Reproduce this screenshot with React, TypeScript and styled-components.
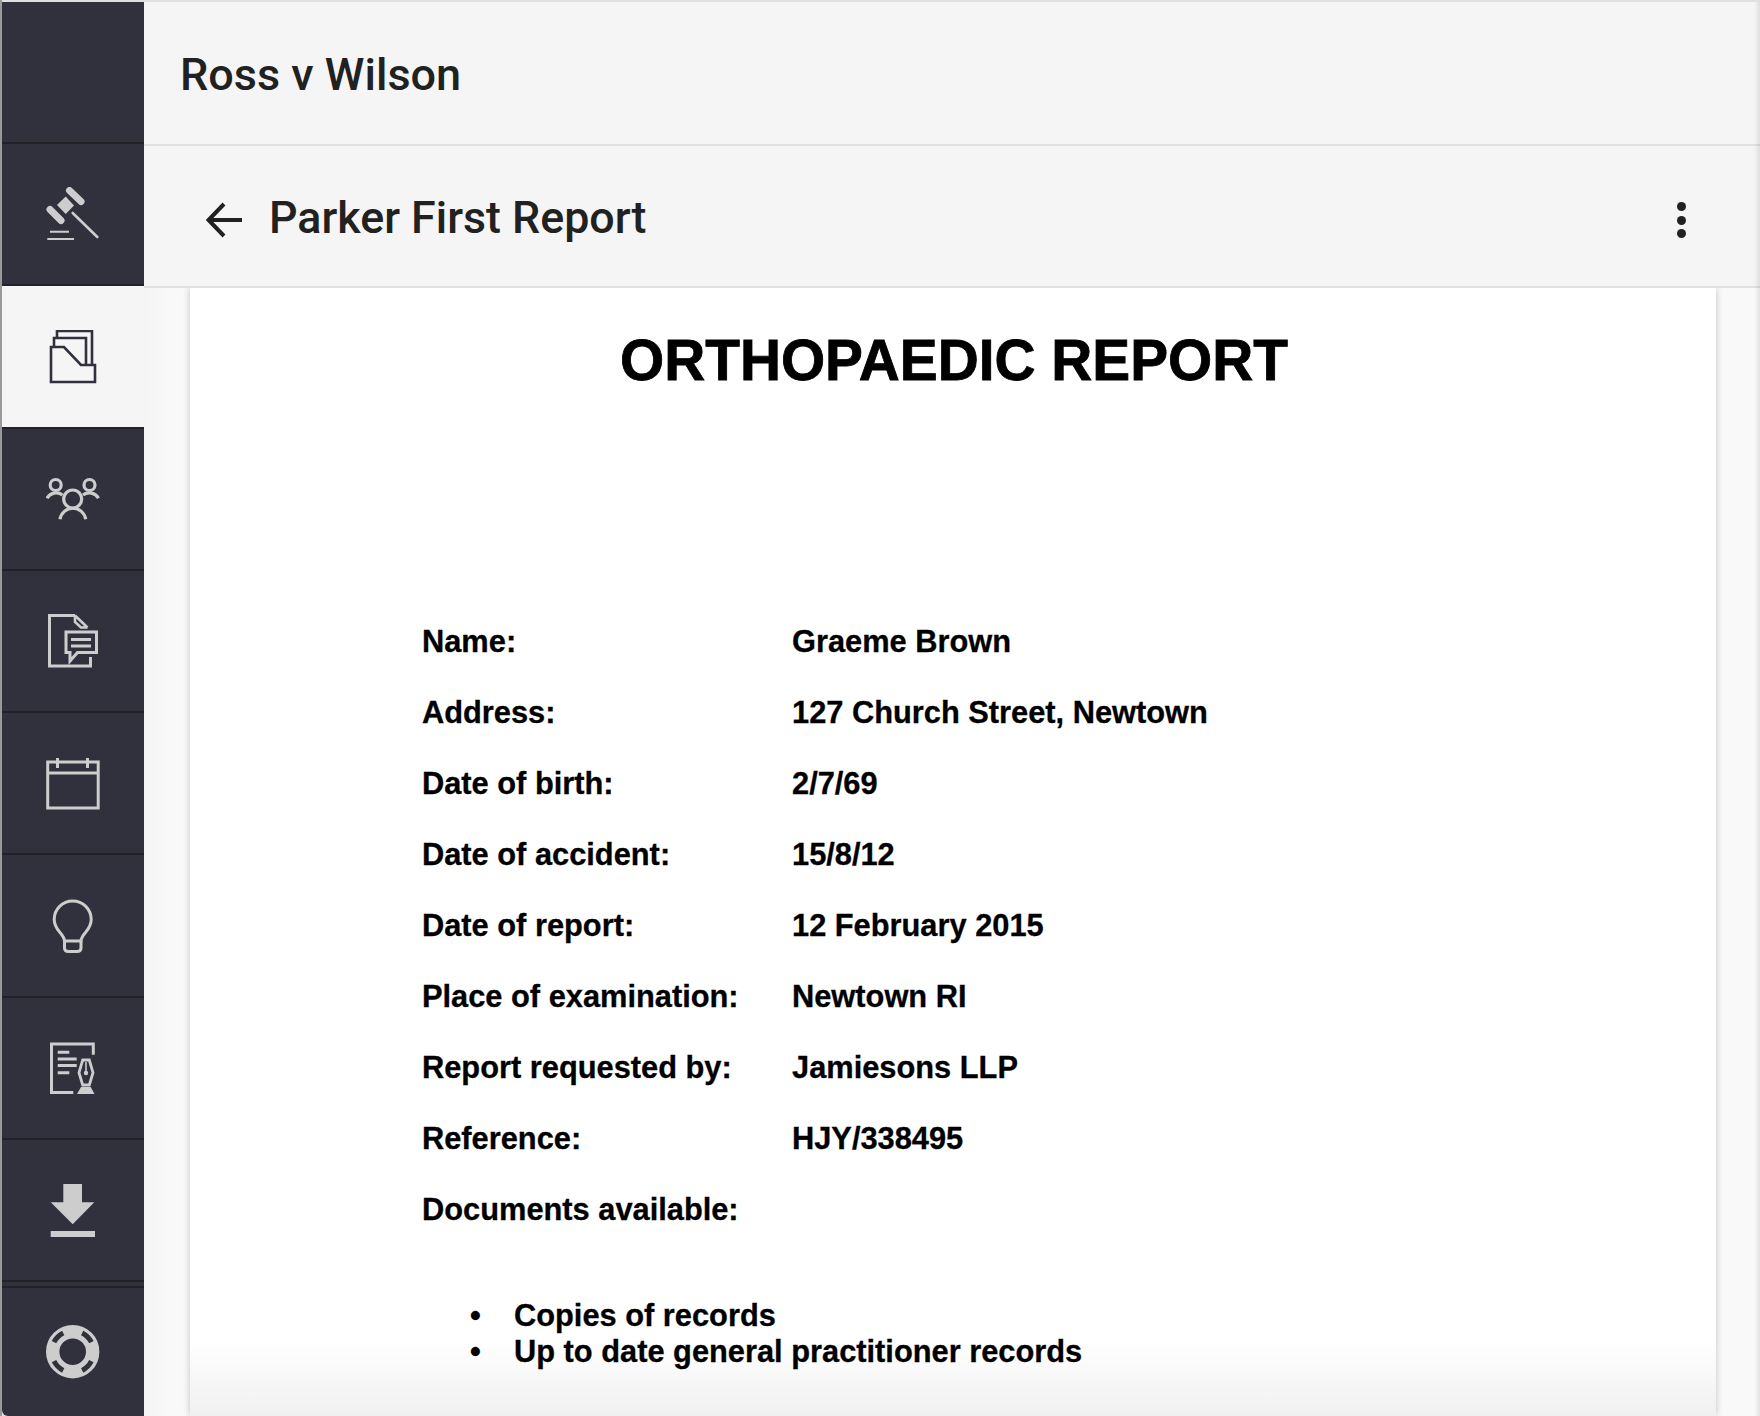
import React from 'react';
import styled, { createGlobalStyle } from 'styled-components';

const GlobalStyle = createGlobalStyle`
  html, body {
    margin: 0;
    padding: 0;
    background: #e0e0e0;
    overflow: hidden;
  }
`;

const Frame = styled.div`
  box-sizing: border-box;
  width: 1760px;
  height: 1416px;
  padding-top: 2px;
  border-left: 2px solid #9a9a9a;
  background: #e0e0e0;
  display: flex;
  overflow: hidden;
`;

const Sidebar = styled.nav`
  width: 142px;
  flex: none;
  display: flex;
  flex-direction: column;
  background: #30313c;
  border-bottom-left-radius: 6px;
  overflow: hidden;
`;

const NavItem = styled.div<{ $active?: boolean }>`
  box-sizing: border-box;
  height: 142.24px;
  flex: none;
  display: flex;
  align-items: center;
  justify-content: center;
  border-bottom: 2px solid #212227;
  background: ${p => (p.$active ? '#f5f5f5' : 'transparent')};
  color: ${p => (p.$active ? '#30313c' : '#cdcdcd')};
`;

const NavGap = styled.div`
  flex: none;
  height: 4px;
  border-bottom: 2px solid #212227;
`;

const HelpItem = styled.div`
  flex: 1;
  display: flex;
  align-items: center;
  justify-content: center;
  color: #cdcdcd;
`;

const Main = styled.main`
  position: relative;
  flex: 1;
  min-width: 0;
  display: flex;
  flex-direction: column;
  background: #f5f5f5;

  &::after {
    content: '';
    position: absolute;
    top: 0;
    right: 0;
    bottom: 0;
    width: 6px;
    background: linear-gradient(to right, rgba(0, 0, 0, 0), rgba(0, 0, 0, 0.09));
  }
`;

const CaseBar = styled.header`
  box-sizing: border-box;
  height: 144px;
  flex: none;
  display: flex;
  align-items: center;
  padding: 2px 0 0 36px;
  border-bottom: 2px solid #e0e0e0;
`;

const CaseTitle = styled.h1`
  margin: 0;
  font-family: Roboto, sans-serif;
  font-weight: 500;
  font-size: 45px;
  color: #212121;
`;

const ReportBar = styled.div`
  box-sizing: border-box;
  height: 142px;
  flex: none;
  display: flex;
  align-items: center;
  padding: 0 74px 0 62px;
  border-bottom: 2px solid #e0e0e0;
`;

const BackButton = styled.span`
  display: flex;
  margin-top: 8px;
  margin-right: 27px;
  color: #212121;
`;

const ReportTitle = styled.h2`
  margin: 2px 0 0;
  flex: 1;
  font-family: Roboto, sans-serif;
  font-weight: 500;
  font-size: 44.75px;
  color: #212121;
`;

const MenuDots = styled.span`
  display: flex;
  flex-direction: column;
  gap: 4.5px;
  margin-top: 8px;

  i {
    display: block;
    width: 9px;
    height: 9px;
    border-radius: 50%;
    background: #212121;
  }
`;

const Gutter = styled.div`
  flex: 1;
  min-height: 0;
  padding: 0 44px 0 46px;
  background: linear-gradient(to right, #f3f3f3, #f9f9f9 24px);
  overflow: hidden;
`;

const Page = styled.article`
  position: relative;
  box-sizing: border-box;
  height: 100%;
  padding: 37px 0 0 232px;
  background: #fff;
  box-shadow: 0 0 7px rgba(0, 0, 0, 0.22);
  color: #000;
  font-family: 'Liberation Sans', Arial, sans-serif;
  font-weight: 700;
  -webkit-text-stroke: 0.3px #000;
`;

const DocTitle = styled.h3`
  margin: 0 0 209px -230px;
  font-size: 56.8px;
  line-height: 72px;
  text-align: center;
  -webkit-text-stroke: 0.8px #000;
`;

const Details = styled.dl`
  margin: 0;
  display: grid;
  grid-template-columns: 370px 1fr;
  grid-auto-rows: 71px;
  align-items: center;
  font-size: 30.8px;

  dt, dd {
    margin: 0;
  }
`;

const Documents = styled.ul`
  position: relative;
  z-index: 1;
  margin: 53px 0 0;
  padding: 0 0 0 48px;
  list-style: none;
  font-size: 30.8px;
  line-height: 36px;

  li {
    display: flex;
  }

  li::before {
    content: '•';
    flex: none;
    width: 44px;
  }
`;

const BottomFade = styled.div`
  position: absolute;
  left: 0;
  right: 0;
  bottom: 0;
  height: 76px;
  background: linear-gradient(to bottom, rgba(240, 240, 240, 0), #f0f0f0);
`;

const Icon: React.FC<{ box: string; children: React.ReactNode }> = ({ box, children }) => (
  <svg width="54" height="54" viewBox={box} fill="none" stroke="currentColor">
    {children}
  </svg>
);

const GavelIcon = () => (
  <Icon box="46 188 54 54">
    <path d="M69.5 191.5 81 202.5M50 210.5 61 221.5" strokeWidth="7" strokeLinecap="round" />
    <path d="M57 206 65.7 197.5 74 206.5 65.7 215Z" fill="currentColor" stroke="none" />
    <path d="M72.7 214 97.3 238" strokeWidth="2.6" strokeLinecap="round" />
    <path d="M50 232.7H69M47.3 240H74" strokeWidth="2" />
  </Icon>
);

const FolderIcon = () => (
  <Icon box="46 330 54 54">
    <g strokeWidth="2.6">
      <path d="M57 337V331H92V364" />
      <path d="M54 347V338H86V364" />
      <path d="M51 347H64L81 365H95V382H51Z" />
    </g>
  </Icon>
);

const PeopleIcon = () => (
  <Icon box="46 472 54 54">
    <g strokeWidth="3.2">
      <circle cx="55.7" cy="485" r="5.5" />
      <circle cx="89.5" cy="485" r="5.5" />
      <circle cx="72.7" cy="499" r="9" />
      <path d="M60 519.3A13 13 0 0 1 85.7 519.3" />
      <path d="M47 498.3A10.5 10.5 0 0 1 62.5 495" />
      <path d="M98.5 498.3A10.5 10.5 0 0 0 83 495" />
    </g>
  </Icon>
);

const CommentDocIcon = () => (
  <Icon box="46 614 54 54">
    <g strokeWidth="3">
      <path d="M75 615.5H49.5V666H90.5V657" />
      <path d="M75 615.5V622L81 627.5H87.5M75 615.5 87.5 627.5" strokeWidth="2.6" />
      <path d="M71 646H91M71 639.5H91" />
      <path d="M66 632H96.5V652.5H77.5L70 661V652.5H66Z" />
    </g>
  </Icon>
);

const CalendarIcon = () => (
  <Icon box="46 756 54 54">
    <g strokeWidth="3">
      <rect x="47.7" y="762" width="50.5" height="46" />
      <path d="M47.7 773H98.2M57.5 758V768M87.5 758V768" />
    </g>
  </Icon>
);

const BulbIcon = () => (
  <Icon box="46 898 54 54">
    <g strokeWidth="3">
      <path d="M64.5 940C64 932 54.2 930 54.2 918.5A18.5 18.5 0 1 1 91.2 918.5C91.2 930 81.5 932 81 940Z" />
      <path d="M64.5 940V947Q64.5 950.5 68.5 950.5H77Q81 950.5 81 947V940" />
    </g>
  </Icon>
);

const SignedDocIcon = () => (
  <Icon box="46 1039 54 54">
    <path d="M93.3 1052.7V1042H51.5V1090.5H73.3" strokeWidth="3" />
    <path d="M57.7 1050.2H69.3M57.7 1056.9H76.7M57.7 1063.5H76.7M57.7 1070.7H69.3" strokeWidth="3" />
    <path d="M82.7 1058H89.3L93 1070.7 89.3 1083H82.7L79 1070.7Z" strokeWidth="2.8" />
    <path d="M86 1060V1070" strokeWidth="1.6" />
    <circle cx="86" cy="1071" r="2.2" fill="currentColor" stroke="none" />
    <path d="M81 1085H90.7L94.5 1092H77Z" fill="currentColor" stroke="none" />
  </Icon>
);

const DownloadIcon = () => (
  <Icon box="46 1182 54 54">
    <path
      d="M63.3 1183H82V1201.3H94.3L72.7 1223.3 50.7 1201.3H63.3ZM50.7 1230H95V1236H50.7Z"
      fill="currentColor"
      stroke="none"
    />
  </Icon>
);

const HelpIcon = () => (
  <Icon box="46 1325 54 54">
    <circle cx="72.7" cy="1351.7" r="20" strokeWidth="13.4" />
    <path
      d="M82.2 1333A21 21 0 0 1 91.4 1342.2M91.4 1361.2A21 21 0 0 1 82.2 1370.4M63.2 1370.4A21 21 0 0 1 54 1361.2M54 1342.2A21 21 0 0 1 63.2 1333"
      stroke="#30313c"
      strokeWidth="5"
    />
  </Icon>
);

const details = [
  ['Name:', 'Graeme Brown'],
  ['Address:', '127 Church Street, Newtown'],
  ['Date of birth:', '2/7/69'],
  ['Date of accident:', '15/8/12'],
  ['Date of report:', '12 February 2015'],
  ['Place of examination:', 'Newtown RI'],
  ['Report requested by:', 'Jamiesons LLP'],
  ['Reference:', 'HJY/338495'],
  ['Documents available:', ''],
];

export default function App() {
  return (
    <>
      <GlobalStyle />
      <Frame>
        <Sidebar>
          <NavItem />
          <NavItem><GavelIcon /></NavItem>
          <NavItem $active><FolderIcon /></NavItem>
          <NavItem><PeopleIcon /></NavItem>
          <NavItem><CommentDocIcon /></NavItem>
          <NavItem><CalendarIcon /></NavItem>
          <NavItem><BulbIcon /></NavItem>
          <NavItem><SignedDocIcon /></NavItem>
          <NavItem><DownloadIcon /></NavItem>
          <NavGap />
          <HelpItem><HelpIcon /></HelpItem>
        </Sidebar>
        <Main>
          <CaseBar>
            <CaseTitle>Ross v Wilson</CaseTitle>
          </CaseBar>
          <ReportBar>
            <BackButton>
              <svg width="36" height="36" viewBox="0 0 36 36" fill="none" stroke="currentColor" strokeWidth="4">
                <path d="M36 18H3M18 2 2.5 18 18 34" />
              </svg>
            </BackButton>
            <ReportTitle>Parker First Report</ReportTitle>
            <MenuDots><i /><i /><i /></MenuDots>
          </ReportBar>
          <Gutter>
            <Page>
              <DocTitle>ORTHOPAEDIC REPORT</DocTitle>
              <Details>
                {details.map(([label, value]) => (
                  <React.Fragment key={label}>
                    <dt>{label}</dt>
                    <dd>{value}</dd>
                  </React.Fragment>
                ))}
              </Details>
              <Documents>
                <li>Copies of records</li>
                <li>Up to date general practitioner records</li>
              </Documents>
              <BottomFade />
            </Page>
          </Gutter>
        </Main>
      </Frame>
    </>
  );
}
